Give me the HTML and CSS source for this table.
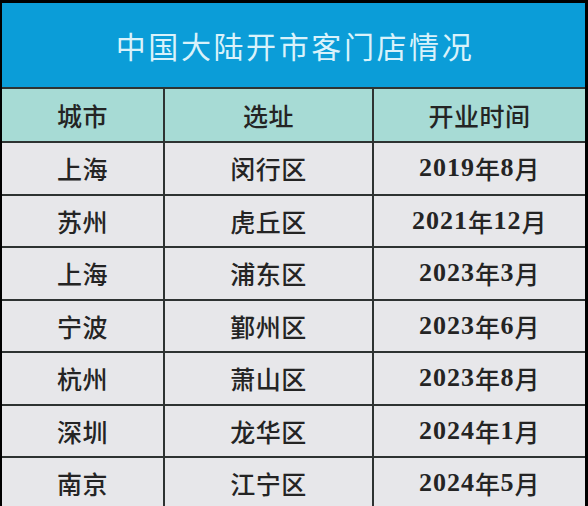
FILE: index.html
```html
<!DOCTYPE html>
<html lang="zh-CN">
<head>
<meta charset="utf-8">
<link rel="stylesheet" href="styles.css">
</head>
<body>
<div class="frame">
  <div class="title">中国大陆开市客门店情况</div>
  <div class="grid">
    <div class="cell head">城市</div><div class="cell head">选址</div><div class="cell head">开业时间</div>
    <div class="cell">上海</div><div class="cell">闵行区</div><div class="cell"><span class="num">2019</span>年<span class="num">8</span>月</div>
    <div class="cell">苏州</div><div class="cell">虎丘区</div><div class="cell"><span class="num">2021</span>年<span class="num">12</span>月</div>
    <div class="cell">上海</div><div class="cell">浦东区</div><div class="cell"><span class="num">2023</span>年<span class="num">3</span>月</div>
    <div class="cell">宁波</div><div class="cell">鄞州区</div><div class="cell"><span class="num">2023</span>年<span class="num">6</span>月</div>
    <div class="cell">杭州</div><div class="cell">萧山区</div><div class="cell"><span class="num">2023</span>年<span class="num">8</span>月</div>
    <div class="cell">深圳</div><div class="cell">龙华区</div><div class="cell"><span class="num">2024</span>年<span class="num">1</span>月</div>
    <div class="cell">南京</div><div class="cell">江宁区</div><div class="cell"><span class="num">2024</span>年<span class="num">5</span>月</div>
  </div>
</div>
</body>
</html>
```
FILE: styles.css
```css
html, body {
  margin: 0;
  padding: 0;
  background: #000;
}
.frame {
  box-sizing: border-box;
  width: 588px;
  height: 506px;
  padding: 3px 3px 4px 2px;
  background: #000;
  overflow: hidden;
}
.title {
  height: 84px;
  background: #0b9dd8;
  color: #d9f2fb;
  font-family: "Noto Sans CJK SC", sans-serif;
  font-size: 30px;
  letter-spacing: 2.6px;
  display: flex;
  align-items: center;
  justify-content: center;
  padding-left: 3px;
}
.grid {
  display: grid;
  grid-template-columns: 161px 207px 1fr;
  grid-template-rows: 52px repeat(7, 50.5px);
  gap: 2px;
  padding-top: 2px;
  background: #2e3332;
  height: 420px;
  overflow: hidden;
}
.cell {
  background: #e7e7ea;
  color: #242424;
  font-family: "Noto Sans CJK SC", sans-serif;
  font-weight: 500;
  font-size: 25px;
  display: flex;
  align-items: center;
  justify-content: center;
  letter-spacing: 0.5px;
}
.head {
  background: #a7dbd5;
}
.num {
  font-family: "Liberation Serif", serif;
  font-weight: 700;
  font-size: 26px;
  letter-spacing: 1px;
}
```
